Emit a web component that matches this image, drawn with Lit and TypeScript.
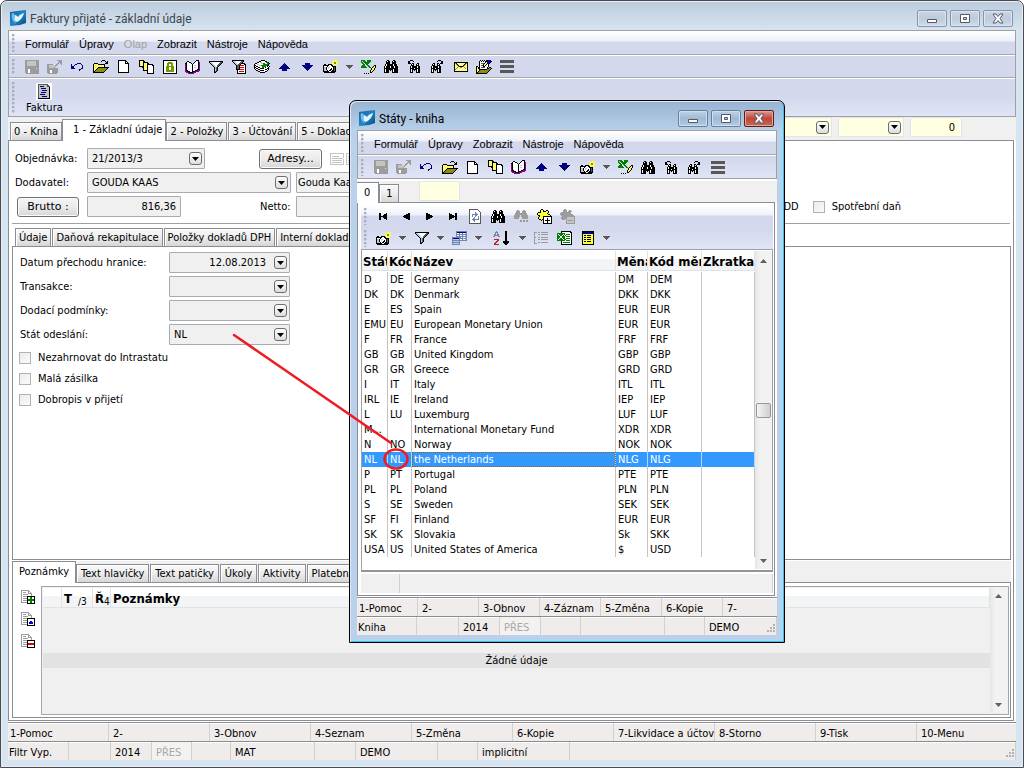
import { LitElement, html, svg, css, nothing } from "lit";
import { customElement, property } from "lit/decorators.js";
import { classMap } from "lit/directives/class-map.js";

/* ---------- pixel icons ---------- */

const PALETTE: Record<string, string> = {
  k: "#000000", w: "#ffffff", n: "#000080", g: "#9c9c9c", d: "#585858", s: "#c4c4c4",
  y: "#ffff40", f: "#fff79a", o: "#8c8c10", e: "#008000", r: "#e00000", p: "#900090",
  b: "#0000e0", t: "#a8d8dc", l: "#6f9a00", m: "#6f86b5", i: "#b9c9e6", c: "#c02020",
};

const ICONS: Record<string, string[]> = {
  save: [
    "gggggggggggggg", "ggsssssssssggg", "ggsssssssssggg", "ggsssssssssggg", "ggsssssssssggg",
    "ggsssssssssggg", "gggggggggggggg", "gggggggggggggg", "ggggggggggg.gg", "gggwwggggggggg",
    "gggwwggggggggg", "gggwwggggggggg", "gggwwggggggggg", ".ggggggggggggg",
  ],
  saveas: [
    "..........ggggg", "............ggg", "...........gggg", "..........gg.gg", "gggggg...gg...g",
    "ggsssss.gg.....", "ggsssss.g......", "ggsssssg.......", "ggggggggggg....", "ggggggggggg....",
    "gggwwgggggg....", "gggwwgggggg....", "gggwwgggggg....", ".ggggggggg.....",
  ],
  undo: [
    "......nnnn...", "n...nn....n..", "n..n.......n.", "nnn........n.", "nnn........n.",
    "nnnn......nn.", "........nn...", "........n....",
  ],
  open: [
    ".........kkk....", "........k...k.k.", ".............kk.", ".kkkk.......kkk.", "kyfyfkkkkkkk....",
    "kfyfyfyfyfyk....", "kyfyfyfyfyfk....", "kfyfykkkkkkkkkkk", "kyfykoooooooook.", "kfykoooooooook..",
    "kykoooooooook...", "kkoooooooook....", "kkkkkkkkkkk.....",
  ],
  page: [
    "kkkkkkkk...", "kwwwwwwkk..", "kwwwwwwkwk.", "kwwwwwwkkkk", "kwwwwwwwwwk", "kwwwwwwwwwk", "kwwwwwwwwwk",
    "kwwwwwwwwwk", "kwwwwwwwwwk", "kwwwwwwwwwk", "kwwwwwwwwwk", "kwwwwwwwwwk", "kkkkkkkkkkk",
  ],
  pages: [
    "kkkkk..........", "kfyfkk.........", "kyfykkkkk......", "kfyfkfyfkk.....", "kyfykyfykkkkkk.", "kfyfkfyfkwwwwkk",
    "kkkkkyfykwwwwwk", "...kkfyfkwwwwwk", "....kyfykwwwwwk", "....kfyfkwwwwwk", "....kkkkkwwwwwk", "........kwwwwwk",
    "........kwwwwwk", "........kkkkkkk",
  ],
  lock: [
    "kkkkkkkkkkkkkk", "kwwwwwwwwwwwwk", "kwwwwllllwwwwk", "kwwwllllllwwwk", "kwwwllwwllwwwk", "kwwwllwwllwwwk",
    "kwwllllllllwwk", "kwwlllwwlllwwk", "kwwlllwwlllwwk", "kwwlllwwlllwwk", "kwwllllllllwwk", "kwwllllllllwwk",
    "kwwwwwwwwwwwwk", "kkkkkkkkkkkkkk",
  ],
  book: [
    "...........kkk.", "..kk......kwwk.", ".kwwkk...kwwwkp", "kkwwwwk.kwwwwkp", "pkwwwwwkwwwwwkp", "pkwwwwwkwsswwkp",
    "pkwwwwwkwwwwwkp", "pkwwwwwkwsswwkp", "pkwwwwwkwwwwwkp", "pkwwwwwkwwwwkkp", "pkkwwwwkwwkkppp", "ppkkkwwkkkpppp.",
    ".pppkkkkppp....", "...pppppp......",
  ],
  funnel: [
    "kkkkkkkkkkkkkk", "kttwwwwwwwwddk", ".kttwwwwwwddk.", "..kttwwwwddk..", "...kttwwddk...", "....kttwdk....",
    ".....ktdk.....", ".....ktdk.....", ".....ktdk.....", ".....ktdk.....", ".....kdk......", ".....kk.......",
  ],
  funneldoc: [
    "kkkkkkkkkkkk..", "kttwwwwwwddk..", ".kttwwwwddk...", "..kttwwddkkkk.", "...kttddkwwwkk", "....kddkrrrrwk",
    "....kddkwwwwwk", "....kddkrrrrwk", "....kddkwwwwwk", "....kkkkrrrrwk", ".....kwwwwwwwk", ".....kwrrrrrwk",
    ".....kwwwwwwwk", ".....kkkkkkkkk",
  ],
  stack: [
    ".......kkkk.....", ".....kkwwwwkk...", "...kkwsswwwweek.", ".kkwwwwsseewweek", "kwwsswwwweeeeek.", "kkwwwsseeeeeekk.",
    "kwkkwwwweeeewkwk", "kkwwkkwweewkwwk.", "kwkkwwkkkkwwwkk.", ".kwwkkwwwwwkkwk.", "..kkwwkkkkwwwk..", "....kkwwwwwkk...",
    "......kkkkk.....",
  ],
  up: ["......n......", ".....nnn.....", "....nnnnn....", "...nnnnnnn...", "..nnnnnnnnn..", ".nnnnnnnnnnn.", "....nnnnn....", "....nnnnn...."],
  down: ["....nnnnn....", "....nnnnn....", ".nnnnnnnnnnn.", "..nnnnnnnnn..", "...nnnnnnn...", "....nnnnn....", ".....nnn.....", "......n......"],
  camera: [
    ".........y..y.y", "..........yyyy.", ".........yyooyy", ".........yyooyy", ".kk..kkkk.yyyy.", "kkkkkkwwkky..y.",
    "kwwwkwwwwkkkk..", "ksskwttwwwkdk..", "ksskwtwwkwkdk..", "ksskwwwkkwkdk..", "kssskwkkwkkdk..", "kkkkkkwwkkkkk..",
    ".kkkkkkkkkkk...",
  ],
  excel: [
    "eeee..eeee.....", "e.eee.eeee.....", "ee.eeeeee......", ".ee.eeee.......", "..ee.ee........", ".eee..ee.....kk",
    "eeeee..ee...kyk", "eeeeee..ee.kyyk", "..........kyyk.", "..........kyyk.", ".........kyyk..", ".........kyk...",
    ".........kk....", "...k.k.k.......",
  ],
  binoc: [
    "...kk....kk....", "..kwkk..kwkk...", "..kkkk..kkkk...", "..kkkk..kkkk...", ".kwkkkkkkwkkk..", ".kwkkkkkkwkkk..",
    "kwkkkkwkkkwkkk.", "kwkkkkwkkkwkkk.", "kkkkkkkkkkkkkk.", "kwkkkkkkkwkkkk.", "kwkkk.k.kwkkkk.", "kwkkk...kwkkkk.", "kkkkk...kkkkkk.",
  ],
  binocprev: [
    "..kkk........", "kk...k.......", "kk...........", "kkk.kk...kk..", "...kwk..kwk..", "...kkk..kkk..", "..kwkkkkkwkk.",
    "..kwkkkkkwkk.", "..kkkkwkkkkk.", "..kwkkkkkwkk.", "..kwk.k.kwkk.", "..kwk...kwkk.", "..kkk...kkkk.",
  ],
  binocnext: [
    ".......kkk...", "......k...kk.", "..........kk.", "..kk..kk.kkk.", ".kwk..kwk....", ".kkk..kkk....", "kwkkkkkwkk...",
    "kwkkkkkwkk...", "kkkkwkkkkk...", "kwkkkkkwkk...", "kwk.k.kwkk...", "kwk...kwkk...", "kkk...kkkk...",
  ],
  binocoff: [
    "...gg....gg....", "..gggg..gggg...", "..gggg..gggg...", ".gggggggggggg..", ".gggggggggggg..", "gggggg.ggggggg.",
    "gggggg.ggggggg.", "ggggg...gggggg.", "ggggg...gggggg.", "...............", "......gg.gg.gg.", "......gg.gg.gg.",
  ],
  mail: [
    "kkkkkkkkkkkkkk", "kokffffffffkok", "kfokffffffkofk", "kffokffffkoffk", "kfffokkkkofffk", "kffoffooffoffk",
    "kfoffffffffofk", "kofffffffffffk", "kffffffffffffk", "kkkkkkkkkkkkkk",
  ],
  edit: [
    "....k.k.k.kkbbk.", "...kwkwkwkkbbbbk", "...kwwwwwkybbbk.", "...kwdddkyykbk..", "...kwwwkyykwk...", "...kwddkykwwk...",
    "kk.kwwwkkwwwk...", "kykkwddddwwk.kk.", "kykkwwwwwwwkkook", "kyfkkkkkkkkoook.", "kyfkoooooooook..", "kykoooooooook...",
    "kkoooooooook....", "kkkkkkkkkkk.....",
  ],
  menu: [
    "dddddddddddddd", "dddddddddddddd", "dddddddddddddd", "..............", "..............", "dddddddddddddd", "dddddddddddddd",
    "dddddddddddddd", "..............", "..............", "dddddddddddddd", "dddddddddddddd", "dddddddddddddd",
  ],
  drop: ["ddddddd", ".ddddd.", "..ddd..", "...d..."],
  first: ["kk.....k..", "kk...kkk..", "kk..kkkk..", "kkkkkkkk..", "kk..kkkk..", "kk...kkk..", "kk.....k.."],
  prev: [".....kk.", "...kkkk.", ".kkkkkk.", "kkkkkkk.", ".kkkkkk.", "...kkkk.", ".....kk."],
  next: ["kk.....", "kkkk...", "kkkkkk.", "kkkkkkk", "kkkkkk.", "kkkk...", "kk....."],
  last: ["k.....kk", "kkk...kk", "kkkkk.kk", "kkkkkkkk", "kkkkk.kk", "kkk...kk", "k.....kk"],
  refresh: [
    "ddddddddd....", "dwwwwwwwwd...", "dwwwwwwwwwd..", "dwwwwwmwwwwd.", "dwwwwwmmwwwd.", "dwwmmmmmmwwd.", "dwwmwwmmwwwd.", "dwwmwwmwwmwd.",
    "dwwwwmwwwmwd.", "dwwwmmwwwmwd.", "dwwmmmmmmmwd.", "dwwwmmwwwwwd.", "dwwwwmwwwwwd.", "dwwwwwwwwwwd.", "dddddddddddd.",
  ],
  staradd: [
    "....kk.........", "...kyyk..kk....", "...kyykkkyyk...", ".kkkyyyyyyyk...", "kyyyyyyyyyk....", "kyyyyyyyyyykk..", ".kkyyyyyyyyyyk.",
    "..kyyykkkkkkkkk", ".kyyyykwwwwwwwk", ".kyyyykwwwkwwwk", "..kkykkwwwkwwwk", "....k.kwkkkkkwk", "......kwwwkwwwk", "......kwwwkwwwk", "......kkkkkkkkk",
  ],
  starsub: [
    "....gg.........", "...gggg..gg....", "...gggg.gggg...", ".gggggggggg....", "ggggggggggg....", "ggggggggggggg..", ".ggggggggggggg.",
    "..ggggggggggggg", ".ggggggsssssssg", ".ggggggsssssssg", "..ggg.gsssssssg", "......gsgggggsg", "......gsssssssg", "......gsssssssg", "......ggggggggg",
  ],
  card: [
    "....mmmmmmmmmmm", "....mnnnnnnnnnm", "....mwwmwwmwwim", "....mmmmmmmmmmm", "....mwwmwwmwwim", "....mmmmmmmmmmm", "mmmmmmmmmwmwwim",
    "mnnnnnnmmmmmmmm", "miiiiiimwwmwwim", "mmmmmmmmmmmmmmm", "miiiiiim.......", "mmmmmmmm.......", "miiiiiim.......", "mmmmmmmm.......",
  ],
  sort: [
    "...m........kk.", "..mmm.......kk.", "..m.m.......kk.", ".mm.mm......kk.", ".mmmmm......kk.", "mm...mm.....kk.", "............kk.", "............kk.",
    ".ccccc......kk.", "....cc......kk.", "...cc.....kkkkkk", "..cc......kkkkkk", ".cc........kkkk.", ".ccccc......kk..",
  ],
  tree: [
    "ggg.gg.ggggggg.", "g..............", "g...gg.ggggggg.", "g..............", "g..............", "gg..gg.ggggggg.", "g..............",
    "g...gg.ggggggg.", "g..............", "g..............", "g...gg.ggggggg.", "ggg............",
  ],
  sheet: [
    "....kkkkkkkkkk.", "....kwwwwwwwwkk", "eeeeeeeewwwwwwk", "eweeeeweweeeewk", "eeweewewewwwwwk", "eeewweeeweeeewk", "eeewweeewwwwwwk",
    "eeweeweeweeeewk", "eweeeeweewwwwwk", "eeeeeeeeweeeewk", "....kwwwwwwwwwk", "....kweeeeeeewk", "....kwwwwwwwwwk", "....kkkkkkkkkkk",
  ],
  grid: [
    "kkkkkkkkkkkk", "knnnnnnnnnnk", "knnnnnnnnnnk", "kyyyyyyyyyyk", "kykkykkkkyyk", "kyyyyyyyyyyk", "kykkykkkkyyk", "kyyyyyyyyyyk",
    "kykkykkkkyyk", "kyyyyyyyyyyk", "kykkykkkkyyk", "kyyyyyyyyyyk", "kyyyyyyyyyyk", "kkkkkkkkkkkk",
  ],
  invoice: [
    "dddddddddd...", "dssssssssdd..", "dsnnnnsssddd.", "dssssssssssk.", "dssnnnnnsssk.", "dssssssssssk.", "dsssnnnnnssk.", "dssssssssssk.",
    "dssnnnnnsssk.", "dssssssssssk.", "dsnnnnnssssk.", "dssssssssssk.", "dsssnnnnnssk.", "dssssssssssk.", "kkkkkkkkkkkk.",
  ],
  note: [
    "ssssssssssssss", "swwwwwwwwwwwws", "swwwwwwwwwwwws", "swssssssswwwws", "swwwwwwwwwwwws", "swsssssssssssw", "swwwwwwwwwwwws",
    "swssssssssssws", "swwwwwwwwwwwws", "swssssssssssws", "swwwwwwwwwwwws", "ssssssssssssss",
  ],
  rowadd: [
    "gggggggg......", "gwwwwwwgg.....", "gwgggwwgwg....", "gwwwwwwgggg...", "gwgggggwwwg...", "gwwwwwwwwwg...", "gwggggkkkkkkkk", "gwwwwwkwweewwk",
    "gwggggkwweewwk", "gwwwwwkeeeeeek", "gwggggkeeeeeek", "gwwwwwkwweewwk", "ggggggkwweewwk", "......kkkkkkkk",
  ],
  rowedit: [
    "gggggggg......", "gwwwwwwgg.....", "gwgggwwgwg....", "gwwwwwwgggg...", "gwgggggwwwg...", "gwwwwwwwwwg...", "gwggggkkkkkkkk", "gwwwwwkwwwwwwk",
    "gwggggkwwwwwwk", "gwwwwwkwwbbwwk", "gwggggkwbbbbwk", "gwwwwwkwbbbbwk", "ggggggkwwwwwwk", "......kkkkkkkk",
  ],
  rowdel: [
    "gggggggg......", "gwwwwwwgg.....", "gwgggwwgwg....", "gwwwwwwgggg...", "gwgggggwwwg...", "gwwwwwwwwwg...", "gwggggkkkkkkkk", "gwwwwwkwwwwwwk",
    "gwggggkwwwwwwk", "gwwwwwkrrrrrrk", "gwggggkrrrrrrk", "gwwwwwkwwwwwwk", "ggggggkwwwwwwk", "......kkkkkkkk",
  ],
};

/** Draws a named bitmap as runs of one-pixel rectangles. */
function icon(name: string) {
  const rows = ICONS[name];
  const width = Math.max(...rows.map((r) => r.length));
  const runs: unknown[] = [];
  rows.forEach((row, y) => {
    for (let x = 0; x < row.length; ) {
      const ch = row[x];
      let end = x + 1;
      while (end < row.length && row[end] === ch) end++;
      if (ch !== ".") runs.push(svg`<rect x=${x} y=${y} width=${end - x} height="1" fill=${PALETTE[ch]}></rect>`);
      x = end;
    }
  });
  return html`<svg width=${width} height=${rows.length} viewBox="0 0 ${width} ${rows.length}" shape-rendering="crispEdges" aria-hidden="true">${runs}</svg>`;
}

const logo = html`<svg width="16" height="16" viewBox="0 0 16 16" aria-hidden="true">
  <defs><linearGradient id="lg" x1="0" y1="0" x2="1" y2="1"><stop offset="0" stop-color="#1b5f9c"/><stop offset=".5" stop-color="#1d86c9"/><stop offset="1" stop-color="#0a4577"/></linearGradient></defs>
  <path d="M0 2 7 1l9-1v13l-6 2-10 1z" fill="url(#lg)"/>
  <path d="M5 5c1 0 2 1 3 2 1-2 3-3 6-4-1 4-3 7-7 9-3-1-4-4-2-7z" fill="#e4f4fc"/>
  <path d="M2 3c-1 4 0 8 4 11-1-2-2-5-1-8 0-2-1-3-3-3z" fill="#6cc0ea"/>
</svg>`;

/* ---------- shared styles ---------- */

const base = css`
  *, *::before, *::after { box-sizing: border-box; }
  :host { display: block; font: 11px/15px "DejaVu Sans Condensed", "DejaVu Sans", sans-serif; color: #000; }
  svg { display: block; flex: none; }
  button, input, select { font: inherit; color: inherit; margin: 0; padding: 0; border: 0; border-radius: 0; background: none; }
`;

/* ---------- window frame ---------- */

@customElement("app-window")
class AppWindow extends LitElement {
  @property() heading = "";
  @property({ type: Boolean, reflect: true }) active = false;
  static styles = [base, css`
    :host {
      display: flex; flex-direction: column; padding: 0 7px 7px; overflow: hidden;
      border: 1px solid #4b4a50; border-radius: 7px 7px 0 0;
      background: linear-gradient(#bccbdb, #d7e4f1 30px); box-shadow: inset 0 0 0 1px #e6eef6;
    }
    :host([active]) {
      border-color: #000; background: linear-gradient(#98b4d2, #b9d1ea 30px);
      box-shadow: inset 1px 1px 0 #dbe8f5, inset -1px -1px 0 #2fc6ec;
    }
    .title { display: flex; align-items: flex-start; height: 29px; padding: 9px 3px 0 2px; }
    .name { flex: 1; margin: 0 0 0 4px; font: 400 12px/18px Roboto, "Noto Sans", sans-serif; color: #3c4650; }
    :host([active]) .name { color: #000; }
    .buttons { display: flex; gap: 3px; }
    .buttons button {
      display: grid; place-items: center; width: 30px; height: 17px;
      border: 1px solid #8793ad; border-radius: 2px; background: linear-gradient(#c9d6e5, #bccbdc 50%, #cedbe9);
      box-shadow: inset 0 0 0 1px #dce6f0;
    }
    :host([active]) .buttons button { border-color: #64809f; background: linear-gradient(#bfd2e6, #a0b9d3 50%, #b3cbe3); box-shadow: inset 0 0 0 1px #cfdff0; }
    :host([active]) .buttons .close { border-color: #5b1d1c; background: linear-gradient(#dd9c91, #c0483a 50%, #c9674e); box-shadow: inset 0 0 0 1px #e2a89f; }
    .client { flex: 1; display: flex; flex-direction: column; min-height: 0; background: #fff; }
  `];
  render() {
    return html`
      <div class="title">
        ${logo}<h1 class="name">${this.heading}</h1>
        <div class="buttons">
          <button aria-label="Minimalizovat"><svg width="12" height="11"><path d="M1.5 6.5h9v3h-9z" fill="#fff" stroke="#55596b"/></svg></button>
          <button aria-label="Maximalizovat"><svg width="12" height="11"><path d="M1.5 1.5h9v8h-9z" fill="#fff" stroke="#55596b"/><path d="M4.5 4.5h3v2h-3z" fill="#b9cbdf" stroke="#55596b"/></svg></button>
          <button class="close" aria-label="Zavřít"><svg width="12" height="11"><path d="M1 1h3l2 2.5L8 1h3L8 5.500l3 4.500H8L6 7.500 4 10H1l3-4.500z" fill="#fff" stroke="#55596b"/></svg></button>
        </div>
      </div>
      <div class="client"><slot></slot></div>`;
  }
}

/* ---------- menu and tool bars ---------- */

interface MenuItem { text: string; off?: boolean }

@customElement("tool-bars")
class ToolBars extends LitElement {
  @property({ attribute: false }) menu: MenuItem[] = [];
  @property({ attribute: false }) tools: string[][] = [];
  @property() launch = "";
  static styles = [base, css`
    :host { border: 1px solid #a0a0a0; }
    .bars { background: linear-gradient(#fff, #eef1f9 10px, #d3d8ec 11px, #d3d8ec calc(100% - 20px), #dfe4f6); }
    .bar { display: flex; align-items: center; height: 24px; padding-left: 3px; border-bottom: 1px solid #a8a8a8; }
    .bar + .bar { border-top: 1px solid #fff; }
    .bar:last-child { border-bottom: 0; }
    .slim { height: 23px; }
    .plain .bar { height: 22px; border: 0; }
    .bar::before { content: ""; align-self: stretch; width: 3px; margin: 3px 0 2px; background: radial-gradient(circle at 1px 1px, #a9aec0 1px, #fff0 2px) 0 0 / 3px 4px; }
    .menu { gap: 10px; font: 11px/15px "Liberation Sans", sans-serif; }
    .menu button { padding-top: 4px; }
    .menu button:disabled { color: #a0a0a0; }
    .icon { display: grid; place-items: center; width: 23px; height: 20px; }
    .icon.drop { width: 15px; }
    .icon.sort { width: 29px; }
    .gap { width: 5px; }
    .tall { height: 38px; align-items: stretch; }
    .launch { display: flex; flex-direction: column; align-items: center; margin-left: 11px; padding-top: 4px; }
    .launch span { padding: 1px 1px 1px 2px; background: #fff; }
  `];
  render() {
    return html`<div class=${classMap({ bars: true, plain: !this.menu.length })}>
      ${this.menu.length ? html`<div class="bar menu">${this.menu.map((m) => html`<button ?disabled=${m.off}>${m.text}</button>`)}</div>` : nothing}
      ${this.tools.map((row) => html`<div class="bar slim" role="toolbar"><i class="gap"></i>
        ${row.map((t) => html`<button class=${classMap({ icon: true, drop: t === "drop", sort: t === "sort" })} aria-label=${t}>${icon(t)}</button>`)}</div>`)}
      ${this.launch ? html`<div class="bar tall"><button class="launch"><span>${icon("invoice")}</span>${this.launch}</button></div>` : nothing}
    </div>`;
  }
}

/* ---------- status bars ---------- */

interface Cell { text?: string; size: string; off?: boolean }

@customElement("status-rows")
class StatusRows extends LitElement {
  @property({ attribute: false }) keys: string[] = [];
  @property({ attribute: false }) cells: Cell[] = [];
  @property() size = "1fr";
  static styles = [base, css`
    :host { background: #f0eceb; }
    .row { display: grid; height: 19px; border-top: 1px solid #8c8c8c; box-shadow: inset 0 1px 0 #fff; }
    .row > * { overflow: hidden; white-space: nowrap; text-align: left; padding: 3px 0 0 4px; border-right: 1px solid #d2d0ce; }
    .row > :first-child { padding-left: 2px; }
    .row > :last-child { border-right: 0; }
    .row > .off { color: #a8a8a8; background: #f3f2f1; }
    .foot { position: relative; }
    .foot > :first-child { padding-left: 1px; }
    .grip { position: absolute; right: 1px; bottom: 1px; padding: 0; border: 0; }
  `];
  render() {
    return html`
      <div class="row" style="grid-template-columns:repeat(${this.keys.length - 1},${this.size}) 1fr">${this.keys.map((k) => html`<button>${k}</button>`)}</div>
      <div class="row foot" style="grid-template-columns:${this.cells.map((c) => c.size).join(" ")}">
        ${this.cells.map((c) => html`<span class=${classMap({ off: !!c.off })}>${c.text ?? ""}</span>`)}
        <svg class="grip" width="10" height="10" fill="#b4b0ae"><path d="M7 0h2v2H7zM4 3h2v2H4zM7 3h2v2H7zM1 6h2v2H1zM4 6h2v2H4zM7 6h2v2H7z"/></svg>
      </div>`;
  }
}

/* ---------- application ---------- */

const STATES: string[][] = [
  ["D", "DE", "Germany", "DM", "DEM"], ["DK", "DK", "Denmark", "DKK", "DKK"], ["E", "ES", "Spain", "EUR", "EUR"],
  ["EMU", "EU", "European Monetary Union", "EUR", "EUR"], ["F", "FR", "France", "FRF", "FRF"],
  ["GB", "GB", "United Kingdom", "GBP", "GBP"], ["GR", "GR", "Greece", "GRD", "GRD"], ["I", "IT", "Italy", "ITL", "ITL"],
  ["IRL", "IE", "Ireland", "IEP", "IEP"], ["L", "LU", "Luxemburg", "LUF", "LUF"],
  ["M...", "", "International Monetary Fund", "XDR", "XDR"], ["N", "NO", "Norway", "NOK", "NOK"],
  ["NL", "NL", "the Netherlands", "NLG", "NLG"], ["P", "PT", "Portugal", "PTE", "PTE"], ["PL", "PL", "Poland", "PLN", "PLN"],
  ["S", "SE", "Sweden", "SEK", "SEK"], ["SF", "FI", "Finland", "EUR", "EUR"], ["SK", "SK", "Slovakia", "Sk", "SKK"],
  ["USA", "US", "United States of America", "$", "USD"],
];

const MENU: MenuItem[] = ["Formulář", "Úpravy", "Zobrazit", "Nástroje", "Nápověda"].map((text) => ({ text }));
const MAIN_MENU: MenuItem[] = [...MENU.slice(0, 2), { text: "Olap", off: true }, ...MENU.slice(2)];

const MAIN_TOOLS = [["save", "saveas", "undo", "open", "page", "pages", "lock", "book", "funnel", "funneldoc", "stack", "up", "down",
  "camera", "drop", "excel", "binoc", "binocprev", "binocnext", "mail", "edit", "menu"]];
const BOOK_TOOLS = [["save", "saveas", "undo", "open", "page", "pages", "book", "up", "down", "camera", "drop", "excel", "binoc",
  "binocprev", "binocnext", "menu"]];
const GRID_TOOLS = [
  ["first", "prev", "next", "last", "refresh", "binoc", "binocoff", "staradd", "starsub"],
  ["camera", "drop", "funnel", "drop", "card", "drop", "sort", "drop", "tree", "sheet", "grid", "drop"],
];

const MAIN_CELLS: Cell[] = [
  { text: "Filtr Vyp.", size: "61px" }, { size: "42px" }, { text: "2014", size: "41px" }, { text: "PŘES", size: "40px", off: true },
  { size: "39px" }, { text: "MAT", size: "84px" }, { size: "41px" }, { text: "DEMO", size: "82px" }, { size: "40px" },
  { text: "implicitní", size: "92px" }, { size: "1fr" },
];
const BOOK_CELLS: Cell[] = [
  { text: "Kniha", size: "60px" }, { size: "42px" }, { text: "2014", size: "41px" }, { text: "PŘES", size: "41px", off: true },
  { size: "40px" }, { size: "84px" }, { size: "40px" }, { text: "DEMO", size: "1fr" },
];

@customElement("app-root")
class AppRoot extends LitElement {
  static styles = [base, css`
    :host { position: relative; height: 100vh; min-height: 700px; overflow: hidden; background: #fff; }
    .main { height: 100%; }
    .book { position: absolute; left: 349px; top: 100px; width: 436px; height: 543px; }
    .marks { position: absolute; left: 0; top: 0; pointer-events: none; }

    .tabs { display: flex; align-items: flex-end; height: 21px; background: #f0f0f0; }
    .tabs button {
      height: 18px; padding: 0 4px; margin-right: 1px; white-space: nowrap; border: 1px solid #8c8c96; border-width: 1px 1px 0;
      background: linear-gradient(#f8f8f8, #efefef 45%, #d6d6d6); box-shadow: inset 1px 1px 0 #fff;
    }
    .tabs .on { height: 22px; margin: 0 0 -1px -1px; padding: 0 3px 2px 10px; background: #fff; position: relative; }
    .outer-tabs { height: 23px; padding: 0 0 0 2px; }
    .outer-tabs button { padding: 0 3px; }
    .mid-tabs { height: 19px; padding-left: 3px; background: #fff; }
    .mid-tabs button { padding: 0 3px; }
    .note-tabs .on { padding: 0 6px 2px; margin-left: 0; }
    .yellow { display: flex; gap: 6px; margin: 0 54px 3px auto; }
    .yellow .field { width: 66px; height: 20px; border-color: #e2e4ec; background: #ffffe1; }
    .yellow input.field { width: 52px; padding-right: 6px; }

    .sheet { flex: 1; display: flex; flex-direction: column; min-height: 0; margin: 0 2px 1px 0; padding: 0 2px 2px 3px; border: 1px solid #8c8c96; }
    .head { display: grid; gap: 3px; padding: 7px 0 6px 3px; margin-right: 1px; border-bottom: 1px solid #a0a0a0; }
    .line { display: flex; align-items: center; height: 21px; white-space: nowrap; }
    .line > label:first-child { width: 72px; }
    .field { width: 121px; height: 21px; padding: 0 4px; border: 1px solid #aaabb0; border-radius: 1px; background: #f0f0f0; }
    .combo { display: grid; grid-template: 1fr / 1fr; padding: 0; }
    .combo > * { grid-area: 1 / 1; min-width: 0; }
    .combo select, .combo input { appearance: none; width: 100%; height: 100%; padding: 0 23px 0 4px; outline: 0; }
    .combo .arrow { align-self: center; justify-self: end; display: grid; place-items: center; width: 13px; height: 13px; margin-right: 2px; border: 1px solid #6e6e6e; border-radius: 3px; background: linear-gradient(#fff, #dcdcdc); pointer-events: none; }
    .right { text-align: right; }
    .order { width: 118px; }
    .supplier { width: 204px; }
    .company { width: 380px; margin-left: 5px; padding: 0 1px; }
    .amount { width: 94px; margin-left: 8px; }
    .push { height: 20px; border: 1px solid #707070; border-radius: 3px; background: linear-gradient(#f4f4f4, #ebebeb 50%, #d6d6d6); box-shadow: inset 0 0 0 1px #fcfcfc; font-family: "DejaVu Sans", sans-serif; }
    .addresses { width: 63px; margin: 0 8px 0 54px; }
    .gross { width: 62px; margin-left: 2px; }
    .notes-mini { display: flex; gap: 2px; }
    .netto { margin-left: 79px; }
    .netto + .field { width: 300px; margin-left: 5px; }
    .odd { width: 203px; text-align: right; }
    .check { display: flex; align-items: center; gap: 7px; white-space: nowrap; }
    .check input { appearance: none; width: 12px; height: 12px; border: 1px solid #b0b1b3; background: linear-gradient(135deg, #ececec, #fafafa); }
    .odd + .check { margin-left: 14px; }

    .pane { flex: 1; min-height: 0; margin-bottom: 1px; padding: 5px 6px; border: 1px solid #8c8c96; background: #fff; }
    .form { display: grid; grid-template-columns: 149px 121px; grid-auto-rows: 21px; gap: 3px 0; align-items: center; padding-left: 1px; }
    .checks { display: grid; gap: 6px; margin-top: 5px; }
    .mid { padding-top: 3px; flex: 1; display: flex; flex-direction: column; min-height: 0; }

    .notes { display: flex; height: 136px; padding: 3px 1px 2px 8px; border: 1px solid #8c8c96; }
    .side { display: flex; flex-direction: column; gap: 8px; width: 20px; padding-top: 4px; }
    .notebox { flex: 1; display: flex; border: 1px solid #a5a5ad; padding: 1px; background: #f0f0f0; }
    .notegrid { flex: 1; display: flex; flex-direction: column; }
    table { border-collapse: separate; border-spacing: 0; table-layout: fixed; width: 100%; }
    th { overflow: hidden; height: 20px; padding: 1px 1px 0; text-align: left; font: bold 13px/17px "DejaVu Sans Condensed", "DejaVu Sans", sans-serif; white-space: nowrap; border: 1px solid #e0e2e4; border-width: 0 1px 1px 0; background: linear-gradient(#fff 40%, #f3f4f6 41%); text-overflow: clip; }
    .note-cols th { padding: 2px 1px 0 2px; }
    .note-cols .c0 { width: 19px; } .note-cols .c1 { width: 31px; } .note-cols .c2 { width: 18px; }
    sub { font: 10px/10px "DejaVu Sans Condensed", sans-serif; vertical-align: -2px; line-height: 0; }
    .rank { margin-left: 6px; }
    .empty { margin-top: 45px; height: 15px; background: #e2e2e2; text-align: center; }
    .scroll { display: flex; flex-direction: column; align-items: center; width: 17px; padding: 6px 0; background: linear-gradient(90deg, #e6e6e6, #f2f2f2 30%); color: #606060; }
    .scroll svg:last-child { margin-top: auto; }

    .book-tabs { height: 21px; margin-top: 2px; }
    .book-tabs button { padding: 0 5px 0 6px; }
    .book-tabs .on { height: 21px; margin-left: 0; padding: 0 8px 2px 7px; border-left: 0; }
    .book-tabs .field { width: 41px; height: 20px; margin: 0 0 1px 19px; border-color: #e2e4ec; background: #ffffe1; }
    .book-sheet { flex: 1; display: flex; flex-direction: column; min-height: 0; padding: 2px 1px 2px 3px; margin: 0 2px 1px 0; border: 1px solid #8c8c96; }
    .book-sheet tool-bars { border: 0; }
    .book-strip { border-bottom: 1px solid #c9c9c9; }
    .listbox { flex: 1; display: flex; min-height: 0; padding: 1px 0; border: 1px solid #a0a0a8; border-bottom: 2px solid #94949a; }
    .list { flex: 1; min-width: 0; }
    .list .c0 { width: 26px; } .list .c1 { width: 24px; } .list .c3 { width: 32px; } .list .c4 { width: 54px; } .list .c5 { width: 53px; }
    .list td { height: 15px; padding: 0 0 0 2px; overflow: hidden; white-space: nowrap; border-right: 1px solid #c4c4c4; }
    .list tbody::before { content: ""; display: block; height: 1px; }
    .list .sel td { background: #3399ff; color: #fff; border-right-color: #b5d6f7; }
    .list .sel .focus { outline: 1px dotted #a05a10; outline-offset: -1px; }
    .tall-scroll { justify-content: space-between; padding: 8px 0 6px; }
    .tall-scroll .rail { flex: 1; display: flex; flex-direction: column; }
    .tall-scroll .rail::before { content: ""; flex: 140; }
    .tall-scroll .rail::after { content: ""; flex: 142; }
    .thumb { width: 15px; height: 15px; border: 1px solid #989898; border-radius: 2px; background: linear-gradient(90deg, #f5f5f5, #cfcfd3); }
    .strip { display: grid; grid-template-columns: 39px 1fr; height: 19px; margin-top: 2px; background: #f0f0f0; }
    .strip span { border-right: 1px solid #d0d0d0; }
  `];

  private arrow() {
    return html`<span class="arrow"><svg width="7" height="4"><path d="M0 0h7L3.500 4z"/></svg></span>`;
  }
  private combo(id: string, value: string, cls = "") {
    return html`<div class="field combo ${cls}"><select id=${id} aria-label=${id}><option>${value}</option></select>${this.arrow()}</div>`;
  }
  private tabs(names: string[], on = -1) {
    return names.map((n, i) => html`<button role="tab" class=${classMap({ on: i === on })} aria-selected=${i === on}>${n}</button>`);
  }
  private caret(up: boolean) {
    return html`<svg width="7" height="4" fill="currentColor"><path d=${up ? "M0 4h7L3.500 0z" : "M0 0h7L3.500 4z"}/></svg>`;
  }

  render() {
    return html`
      <app-window class="main" heading="Faktury přijaté - základní údaje">
        <tool-bars .menu=${MAIN_MENU} .tools=${MAIN_TOOLS} launch="Faktura"></tool-bars>
        <div class="tabs outer-tabs">
          ${this.tabs(["0 - Kniha", "1 - Základní údaje", "2 - Položky", "3 - Účtování", "5 - Doklady"], 1)}
          <div class="yellow">${this.combo("rada", "")}${this.combo("obdobi", "")}<input class="field right" aria-label="Počet" value="0"></div>
        </div>
        <div class="sheet">
          <div class="head">
            <div class="line"><label for="obj">Objednávka:</label>${this.combo("obj", "21/2013/3", "order")}
              <button class="push addresses">Adresy...</button>
              <div class="notes-mini">${icon("note")}${icon("note")}</div></div>
            <div class="line"><label for="dod">Dodavatel:</label>${this.combo("dod", "GOUDA KAAS", "supplier")}
              <input class="field company" aria-label="Název dodavatele" value="Gouda Kaas"></div>
            <div class="line"><button class="push gross">Brutto :</button><input class="field amount right" aria-label="Brutto" value="816,36">
              <label class="netto" for="netto">Netto:</label><input class="field" id="netto">
              <span class="odd">DD</span><label class="check"><input type="checkbox">Spotřební daň</label></div>
          </div>
          <div class="mid">
            <div class="tabs mid-tabs">${this.tabs(["Údaje", "Daňová rekapitulace", "Položky dokladů DPH", "Interní doklady"])}</div>
            <div class="pane">
              <div class="form">
                <label for="datum">Datum přechodu hranice:</label>
                <div class="field combo"><input id="datum" class="right" value="12.08.2013">${this.arrow()}</div>
                <label for="trans">Transakce:</label>${this.combo("trans", "")}
                <label for="dodaci">Dodací podmínky:</label>${this.combo("dodaci", "")}
                <label for="stat">Stát odeslání:</label>${this.combo("stat", "NL")}
              </div>
              <div class="checks">
                ${["Nezahrnovat do Intrastatu", "Malá zásilka", "Dobropis v přijetí"].map((t) => html`<label class="check"><input type="checkbox">${t}</label>`)}
              </div>
            </div>
          </div>
          <div class="tabs note-tabs">${this.tabs(["Poznámky", "Text hlavičky", "Text patičky", "Úkoly", "Aktivity", "Platební"], 0)}</div>
          <div class="notes">
            <div class="side">${["rowadd", "rowedit", "rowdel"].map((n) => html`<button aria-label=${n}>${icon(n)}</button>`)}</div>
            <div class="notebox">
              <div class="notegrid">
                <table class="note-cols"><colgroup><col class="c0"><col class="c1"><col class="c2"><col></colgroup>
                  <thead><tr><th></th><th>T<sub class="rank">∕3</sub></th><th>Ř<sub>4</sub></th><th>Poznámky</th></tr></thead></table>
                <div class="empty">Žádné údaje</div>
              </div>
              <div class="scroll">${this.caret(true)}${this.caret(false)}</div>
            </div>
          </div>
        </div>
        <status-rows size="101px" .keys=${["1-Pomoc", "2-", "3-Obnov", "4-Seznam", "5-Změna", "6-Kopie", "7-Likvidace a účtování", "8-Storno", "9-Tisk", "10-Menu"]} .cells=${MAIN_CELLS}></status-rows>
      </app-window>

      <app-window class="book" heading="Státy - kniha" active>
        <tool-bars .menu=${MENU} .tools=${BOOK_TOOLS}></tool-bars>
        <div class="tabs book-tabs">${this.tabs(["0", "1"], 0)}<input class="field" aria-label="Hledat"></div>
        <div class="book-sheet">
          <tool-bars class="book-strip" .tools=${GRID_TOOLS}></tool-bars>
          <div class="listbox">
            <div class="list"><table>
              <colgroup><col class="c0"><col class="c1"><col><col class="c3"><col class="c4"><col class="c5"></colgroup>
              <thead><tr>${["Stát", "Kód", "Název", "Měna", "Kód měny", "Zkratka"].map((h) => html`<th>${h}</th>`)}</tr></thead>
              <tbody>${STATES.map((r) => html`<tr class=${classMap({ sel: r[0] === "NL" })}>
                ${[...r, ""].map((v, i) => html`<td class=${classMap({ focus: i === 2 })}>${v}</td>`)}</tr>`)}</tbody>
            </table></div>
            <div class="scroll tall-scroll">${this.caret(true)}<div class="rail"><div class="thumb"></div></div>${this.caret(false)}</div>
          </div>
          <div class="strip"><span></span><span></span></div>
        </div>
        <status-rows size="61px" .keys=${["1-Pomoc", "2-", "3-Obnov", "4-Záznam", "5-Změna", "6-Kopie", "7-"]} .cells=${BOOK_CELLS}></status-rows>
      </app-window>

      <svg class="marks" width="420" height="480" fill="none" stroke="#ed1c24" stroke-width="2.500" stroke-linecap="round" aria-hidden="true">
        <path d="M234 335 391 443"/><ellipse cx="396" cy="459" rx="11.500" ry="9.500"/>
      </svg>`;
  }
}
